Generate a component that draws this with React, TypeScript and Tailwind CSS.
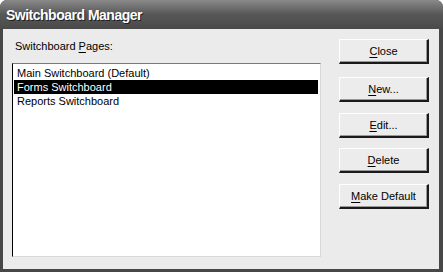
const font = { fontFamily: '"Liberation Sans", Arial, sans-serif' };

function Key({ children }: { children: string }) {
  return <span className="underline underline-offset-[2px]">{children}</span>;
}

function XpButton({ children, className = "" }: { children: React.ReactNode; className?: string }) {
  return (
    <button
      className={`w-[90px] h-[25px] bg-[#ececec] text-[11px] text-black border-t border-l border-t-white border-l-white border-b-2 border-r-2 border-b-[#1a1a1a] border-r-[#1a1a1a] flex items-center justify-center shadow-[inset_-1px_-1px_0_#9a9a9a] ${className}`}
    >
      {children}
    </button>
  );
}

export default function App() {
  const pages = ["Main Switchboard (Default)", "Forms Switchboard", "Reports Switchboard"];
  const selected = 1;

  return (
    <div className="w-[443px] h-[272px] bg-white" style={font}>
      <div className="w-full h-full bg-[#474747] rounded-t-[7px] flex flex-col">
        {/* title bar */}
        <div className="h-[29px] rounded-t-[7px] bg-gradient-to-b from-[#8a8a8a] via-[#575757] to-[#4a4a4a] flex items-start pt-[7px] pl-[6px]">
          <span className="text-[14px] leading-[16px] tracking-[-0.5px] font-bold text-white [text-shadow:1px_1px_0_#202020]">
            Switchboard Manager
          </span>
        </div>

        {/* client area */}
        <div className="flex-1 ml-[3px] mr-[4px] mb-[3px] bg-[#ebebeb] flex">
          <div className="flex flex-col pl-[9px] pt-[11px]">
            <div className="text-[11px] text-black leading-[13px] pl-[3px]">
              Switchboard <Key>P</Key>ages:
            </div>
            <div className="mt-[10px] w-[309px] h-[194px] bg-white border-t border-l border-t-[#7a7a7a] border-l-black border-b border-r border-b-[#d8d8d8] border-r-[#d8d8d8] pt-[2px] px-[1px]">
              {pages.map((p, i) => (
                <div
                  key={p}
                  className={`h-[14px] w-[304px] text-[11px] leading-[14px] pl-[3px] ${
                    i === selected ? "bg-black text-white" : "text-black"
                  }`}
                >
                  {p}
                </div>
              ))}
            </div>
          </div>

          <div className="flex flex-col pl-[18px] pt-[10px]">
            <XpButton>
              <Key>C</Key>lose
            </XpButton>
            <XpButton className="mt-[13px]">
              <Key>N</Key>ew...
            </XpButton>
            <XpButton className="mt-[11px]">
              <Key>E</Key>dit...
            </XpButton>
            <XpButton className="mt-[10px]">
              <Key>D</Key>elete
            </XpButton>
            <XpButton className="mt-[11px]">
              <Key>M</Key>ake Default
            </XpButton>
          </div>
        </div>
      </div>
    </div>
  );
}
